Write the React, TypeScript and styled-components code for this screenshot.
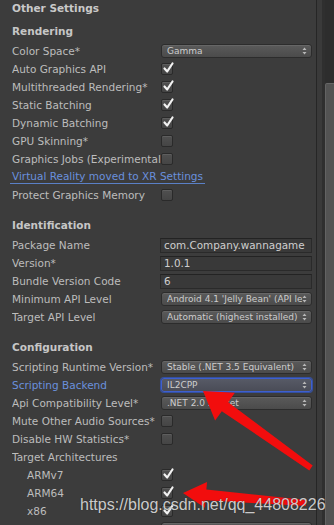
import React from 'react';
import styled, { createGlobalStyle } from 'styled-components';

const GlobalStyle = createGlobalStyle`
  html, body {
    margin: 0;
    padding: 0;
    background: #3c3c3c;
    overflow: hidden;
  }
  body {
    font-family: 'DejaVu Sans', 'Liberation Sans', sans-serif;
  }
`;

const Page = styled.div`
  position: relative;
  display: flex;
  align-items: flex-start;
  height: 525px;
  overflow: hidden;
  background: #3c3c3c;
`;

const Content = styled.div`
  width: 316px;
  flex: 0 0 316px;
  padding-left: 12px;
  box-sizing: border-box;
`;

const Gutter = styled.div`
  flex: 1;
  align-self: stretch;
  display: flex;
  border-left: 1px solid #262626;
`;

const GutterStrip = styled.div<{ $w: number; $bg: string }>`
  width: ${(p) => p.$w}px;
  background: ${(p) => p.$bg};
`;

const Track = styled.div`
  flex: 1;
  display: flex;
  flex-direction: column;
  background: #2d2d2d;
`;

const Thumb = styled.div`
  margin-top: 83px;
  flex: 1;
  background: #535353;
  border-left: 1px solid #636363;
  border-top: 1px solid #666;
  border-radius: 2px 0 0 0;
`;

const Title = styled.div`
  height: 18px;
  margin-top: -1px;
  display: flex;
  align-items: center;
  font-weight: bold;
  font-size: 10.5px;
  color: #c9c9c9;
`;

const Section = styled.div<{ $top: number }>`
  padding-top: ${(p) => p.$top}px;
`;

const Header = styled.div`
  height: 18px;
  margin-bottom: 2px;
  display: flex;
  align-items: center;
  font-weight: bold;
  font-size: 10.5px;
  color: #c6c6c6;
`;

const Row = styled.div`
  height: 18px;
  display: flex;
  align-items: center;
`;

const Label = styled.div<{ $indent?: boolean; $accent?: boolean }>`
  width: 149px;
  flex: 0 0 149px;
  box-sizing: border-box;
  padding-left: ${(p) => (p.$indent ? 15 : 0)}px;
  white-space: nowrap;
  overflow: hidden;
  font-size: 10.5px;
  color: ${(p) => (p.$accent ? '#6a90dc' : '#bdbdbd')};
`;

const Link = styled.span`
  margin-left: -2px;
  padding: 0 2px 1px;
  font-size: 10.5px;
  color: #6a90dc;
  border-bottom: 1px solid #5a80c6;
  white-space: nowrap;
`;

const Box = styled.div`
  width: 12px;
  height: 12px;
  box-sizing: border-box;
  border-radius: 2px;
  background: linear-gradient(#505050, #454545);
  border: 1px solid #2a2a2a;
  box-shadow: inset 0 1px 0 #5e5e5e;
  position: relative;
  display: flex;
  align-items: center;
  justify-content: center;
`;

const Select = styled.div<{ $focus?: boolean }>`
  width: 151px;
  height: 14px;
  box-sizing: border-box;
  border-radius: 3px;
  background: ${(p) =>
    p.$focus ? 'linear-gradient(#575a66, #4a4c57)' : 'linear-gradient(#5a5a5a, #4b4b4b)'};
  border: 1px solid ${(p) => (p.$focus ? '#3e5fcf' : '#2c2c2c')};
  box-shadow: ${(p) => (p.$focus ? '0 0 0 1px #34509f' : 'inset 0 1px 0 #666')};
  display: flex;
  align-items: center;
  padding: 0 4px 0 5px;
  font-size: 9px;
  color: #cdcdcd;
  overflow: hidden;
  white-space: nowrap;
`;

const SelectText = styled.span`
  flex: 1;
  overflow: hidden;
`;

const Field = styled.div`
  margin-left: -1px;
  width: 152px;
  height: 15px;
  box-sizing: border-box;
  background: #393939;
  border: 1px solid #2a2a2a;
  border-top-color: #232323;
  display: flex;
  align-items: center;
  padding-left: 3px;
  font-size: 10.4px;
  color: #cfcfcf;
  white-space: nowrap;
  overflow: hidden;
`;

const Watermark = styled.div`
  position: absolute;
  left: 80px;
  top: 496px;
  font-family: 'Liberation Sans', Arial, sans-serif;
  font-size: 16px;
  color: rgba(226, 226, 226, 0.9);
  text-shadow: 0 0 1px rgba(0, 0, 0, 0.6);
  white-space: nowrap;
`;

const Overlay = styled.svg`
  position: absolute;
  left: 0;
  top: 0;
  pointer-events: none;
`;

const Check = ({ on }: { on?: boolean }) => (
  <Box>
    {on && (
      <svg width="13" height="13" viewBox="0 0 13 13" style={{ position: 'absolute', left: 0, top: -3 }}>
        <path d="M2.5 7.5 L5.2 10.5 L10.5 2.5" fill="none" stroke="#f2f2f2" strokeWidth="2.2" strokeLinecap="round" strokeLinejoin="round" />
      </svg>
    )}
  </Box>
);

const Updown = () => (
  <svg width="5" height="8" viewBox="0 0 5 8">
    <path d="M2.5 0.5 L4.5 3 L0.5 3 Z M2.5 7.5 L4.5 5 L0.5 5 Z" fill="#b8b8b8" />
  </svg>
);

const Drop = ({ value, focus }: { value: string; focus?: boolean }) => (
  <Select $focus={focus}>
    <SelectText>{value}</SelectText>
    <Updown />
  </Select>
);

type Item =
  | { kind: 'check'; label: string; on?: boolean; indent?: boolean }
  | { kind: 'drop'; label: string; value: string; focus?: boolean; accent?: boolean }
  | { kind: 'field'; label: string; value: string }
  | { kind: 'link'; label: string }
  | { kind: 'text'; label: string };

const sections: { title: string; top: number; items: Item[] }[] = [
  {
    title: 'Rendering',
    top: 5,
    items: [
      { kind: 'drop', label: 'Color Space*', value: 'Gamma' },
      { kind: 'check', label: 'Auto Graphics API', on: true },
      { kind: 'check', label: 'Multithreaded Rendering*', on: true },
      { kind: 'check', label: 'Static Batching', on: true },
      { kind: 'check', label: 'Dynamic Batching', on: true },
      { kind: 'check', label: 'GPU Skinning*' },
      { kind: 'check', label: 'Graphics Jobs (Experimental)*' },
      { kind: 'link', label: 'Virtual Reality moved to XR Settings' },
      { kind: 'check', label: 'Protect Graphics Memory' },
    ],
  },
  {
    title: 'Identification',
    top: 12,
    items: [
      { kind: 'field', label: 'Package Name', value: 'com.Company.wannagame' },
      { kind: 'field', label: 'Version*', value: '1.0.1' },
      { kind: 'field', label: 'Bundle Version Code', value: '6' },
      { kind: 'drop', label: 'Minimum API Level', value: "Android 4.1 'Jelly Bean' (API level 16)" },
      { kind: 'drop', label: 'Target API Level', value: 'Automatic (highest installed)' },
    ],
  },
  {
    title: 'Configuration',
    top: 12,
    items: [
      { kind: 'drop', label: 'Scripting Runtime Version*', value: 'Stable (.NET 3.5 Equivalent)' },
      { kind: 'drop', label: 'Scripting Backend', value: 'IL2CPP', focus: true, accent: true },
      { kind: 'drop', label: 'Api Compatibility Level*', value: '.NET 2.0 Subset' },
      { kind: 'check', label: 'Mute Other Audio Sources*' },
      { kind: 'check', label: 'Disable HW Statistics*' },
      { kind: 'text', label: 'Target Architectures' },
      { kind: 'check', label: 'ARMv7', on: true, indent: true },
      { kind: 'check', label: 'ARM64', on: true, indent: true },
      { kind: 'check', label: 'x86', on: true, indent: true },
      { kind: 'drop', label: 'Install Location', value: 'Prefer External' },
    ],
  },
];

const renderItem = (it: Item, i: number) => {
  switch (it.kind) {
    case 'link':
      return (
        <Row key={i}>
          <Link>{it.label}</Link>
        </Row>
      );
    case 'text':
      return (
        <Row key={i}>
          <Label>{it.label}</Label>
        </Row>
      );
    case 'check':
      return (
        <Row key={i}>
          <Label $indent={it.indent}>{it.label}</Label>
          <Check on={it.on} />
        </Row>
      );
    case 'drop':
      return (
        <Row key={i}>
          <Label $accent={it.accent}>{it.label}</Label>
          <Drop value={it.value} focus={it.focus} />
        </Row>
      );
    case 'field':
      return (
        <Row key={i}>
          <Label>{it.label}</Label>
          <Field>{it.value}</Field>
        </Row>
      );
  }
};

// arrow polygon from tip to tail, tapering shaft
const arrow = (tx: number, ty: number, ex: number, ey: number, head: number, hw: number, w0: number, w1: number) => {
  const dx = ex - tx;
  const dy = ey - ty;
  const len = Math.hypot(dx, dy);
  const ux = dx / len;
  const uy = dy / len;
  const nx = -uy;
  const ny = ux;
  const bx = tx + ux * head;
  const by = ty + uy * head;
  const pts = [
    [tx, ty],
    [bx + nx * hw, by + ny * hw],
    [bx + nx * w1, by + ny * w1],
    [ex + nx * w0, ey + ny * w0],
    [ex - nx * w0, ey - ny * w0],
    [bx - nx * w1, by - ny * w1],
    [bx - nx * hw, by - ny * hw],
  ];
  return pts.map((p) => p.map((v) => v.toFixed(1)).join(',')).join(' ');
};

const App = () => {
  return (
    <Page>
      <GlobalStyle />
      <Content>
        <Title>Other Settings</Title>
        {sections.map((s) => (
          <Section key={s.title} $top={s.top}>
            <Header>{s.title}</Header>
            {s.items.map(renderItem)}
          </Section>
        ))}
      </Content>
      <Gutter>
        <GutterStrip $w={5} $bg="#3a3a3a" />
        <GutterStrip $w={3} $bg="#2f2f2f" />
        <Track>
          <Thumb />
        </Track>
      </Gutter>
      <Overlay width="334" height="525" viewBox="0 0 334 525">
        <polygon points={arrow(203, 391, 311, 468, 27, 17, 3, 5.5)} fill="#f20d0d" />
        <polygon points={arrow(183, 493, 306, 503, 23, 13, 3, 5.5)} fill="#f20d0d" />
      </Overlay>
      <Watermark>https://blog.csdn.net/qq_44808226</Watermark>
    </Page>
  );
};

export default App;
